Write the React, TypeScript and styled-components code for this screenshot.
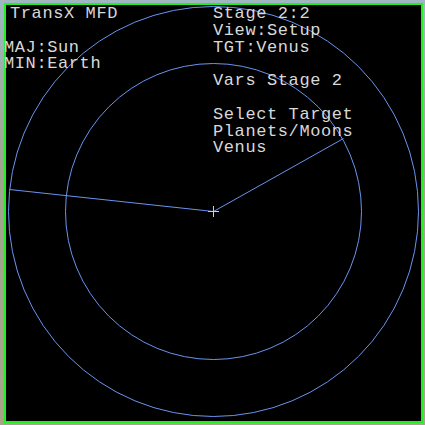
import React from "react";
import styled, { createGlobalStyle } from "styled-components";

const Global = createGlobalStyle`
  html, body { margin: 0; padding: 0; }
  body { background: #a9a78f; }
`;

const Page = styled.div`
  width: 425px;
  height: 425px;
  box-sizing: border-box;
  padding: 3px 2px 2px 4px;
  background: linear-gradient(180deg, #9fb7c2 0%, #9ea58e 40%, #a8a48a 100%);
  overflow: hidden;
`;

const Panel = styled.div`
  position: relative;
  width: 419px;
  height: 420px;
  box-sizing: border-box;
  border: 2px solid #22ee22;
  background: #000;
`;

const Chart = styled.svg`
  position: absolute;
  left: 0;
  top: 0;
  width: 415px;
  height: 416px;
  overflow: visible;
`;

const Columns = styled.div`
  position: relative;
  display: grid;
  grid-template-columns: 209px 1fr;
  margin-left: -2px;
  font-family: "Liberation Mono", "Courier New", monospace;
  font-size: 17px;
  letter-spacing: 0.6px;
  line-height: 16.8px;
  color: #d8d8d8;
  white-space: pre;
`;

const Column = styled.div`
  display: flex;
  flex-direction: column;
  padding-top: 1px;
`;

const Line = styled.div<{ $indent?: number }>`
  height: 16.8px;
  padding-left: ${(p) => p.$indent ?? 0}px;
`;

const cx = 207;
const cy = 206;

export default function App() {
  const left = ["TransX MFD", "", "MAJ:Sun", "MIN:Earth"];
  const right = [
    "Stage 2:2",
    "View:Setup",
    "TGT:Venus",
    "",
    "Vars Stage 2",
    "",
    "Select Target",
    "Planets/Moons",
    "Venus",
  ];
  return (
    <>
      <Global />
      <Page>
        <Panel>
          <Chart viewBox="0 0 415 416">
            <g fill="none" stroke="#6a94f0" strokeWidth={1}>
              <circle cx={cx + 0.5} cy={cy + 0.5} r={205} />
              <circle cx={cx + 0.5} cy={cy + 0.5} r={148} />
              <line x1={cx + 0.5} y1={cy + 0.5} x2={3.5} y2={184.5} />
              <line x1={cx + 0.5} y1={cy + 0.5} x2={337.5} y2={133.5} />
            </g>
            <g stroke="#cfcfcf" strokeWidth={1}>
              <line x1={cx - 5} y1={cy + 0.5} x2={cx + 6} y2={cy + 0.5} />
              <line x1={cx + 0.5} y1={cy - 5} x2={cx + 0.5} y2={cy + 6} />
            </g>
          </Chart>
          <Columns>
            <Column>
              {left.map((t, i) => (
                <Line key={i} $indent={i === 0 ? 6 : 0}>
                  {t}
                </Line>
              ))}
            </Column>
            <Column>
              {right.map((t, i) => (
                <Line key={i}>{t}</Line>
              ))}
            </Column>
          </Columns>
        </Panel>
      </Page>
    </>
  );
}
